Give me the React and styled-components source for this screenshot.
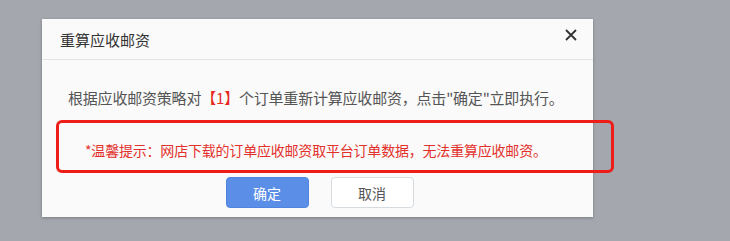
import styled, { createGlobalStyle } from 'styled-components'

const Global = createGlobalStyle`
  html, body {
    margin: 0;
    padding: 0;
    background: #a4a7ae;
    font-family: "Noto Sans CJK SC", "Noto Sans", sans-serif;
  }
`
const Page = styled.div`
  width: 730px;
  height: 241px;
  padding: 19px 0 0 42px;
  box-sizing: border-box;
  overflow: hidden;
`
const Dialog = styled.div`
  position: relative;
  width: 551px;
  height: 198px;
  background: #fafafa;
  box-shadow: 0 1px 3px rgba(0, 0, 0, 0.25);
  display: flex;
  flex-direction: column;
`
const Header = styled.div`
  height: 40px;
  display: flex;
  align-items: center;
  justify-content: space-between;
  padding: 0 12px 0 18px;
  border-bottom: 1px solid #e3e6e8;
`
const Title = styled.div`
  font-size: 15px;
  color: #333;
`
const Close = styled.button`
  border: none;
  background: none;
  padding: 0;
  width: 20px;
  height: 20px;
  display: flex;
  align-items: center;
  justify-content: center;
  margin-top: -8px;
  cursor: pointer;
`
const Body = styled.div`
  padding: 28px 0 0 26px;
`
const Message = styled.p`
  margin: 0;
  font-size: 15px;
  line-height: 20px;
  color: #555;
  letter-spacing: -0.2px;
`
const Hl = styled.span`
  color: #e62a1e;
`
const Warning = styled.p`
  margin: 32px 0 0 17px;
  font-size: 14px;
  line-height: 20px;
  color: #e3302b;
  letter-spacing: -0.2px;
`
const Buttons = styled.div`
  display: flex;
  justify-content: center;
  gap: 22px;
  margin-top: 17px;
  padding-left: 4px;
`
const Button = styled.button`
  width: 83px;
  height: 31px;
  border-radius: 4px;
  font-family: inherit;
  font-size: 14px;
  border: 1px solid ${p => (p.primary ? '#4f84e0' : '#d6dbe0')};
  background: ${p => (p.primary ? '#5b8ee6' : '#fff')};
  color: ${p => (p.primary ? '#fff' : '#555')};
  cursor: pointer;
`
const Annotation = styled.div`
  position: absolute;
  left: 14px;
  top: 101px;
  width: 558px;
  height: 53px;
  box-sizing: border-box;
  border: 3px solid #ee1d17;
  border-radius: 6px;
  pointer-events: none;
`

const App = () => {
  return (
    <Page>
      <Global />
      <Dialog>
        <Header>
          <Title>重算应收邮资</Title>
          <Close aria-label="关闭">
            <svg width="12" height="12" viewBox="0 0 12 12">
              <path d="M1 1 L11 11 M11 1 L1 11" stroke="#333" strokeWidth="1.8" />
            </svg>
          </Close>
        </Header>
        <Body>
          <Message>
            根据应收邮资策略对<Hl>【1】</Hl>个订单重新计算应收邮资，点击"确定"立即执行。
          </Message>
          <Warning>*温馨提示：网店下载的订单应收邮资取平台订单数据，无法重算应收邮资。</Warning>
        </Body>
        <Buttons>
          <Button primary>确定</Button>
          <Button>取消</Button>
        </Buttons>
        <Annotation />
      </Dialog>
    </Page>
  )
}
export default App
